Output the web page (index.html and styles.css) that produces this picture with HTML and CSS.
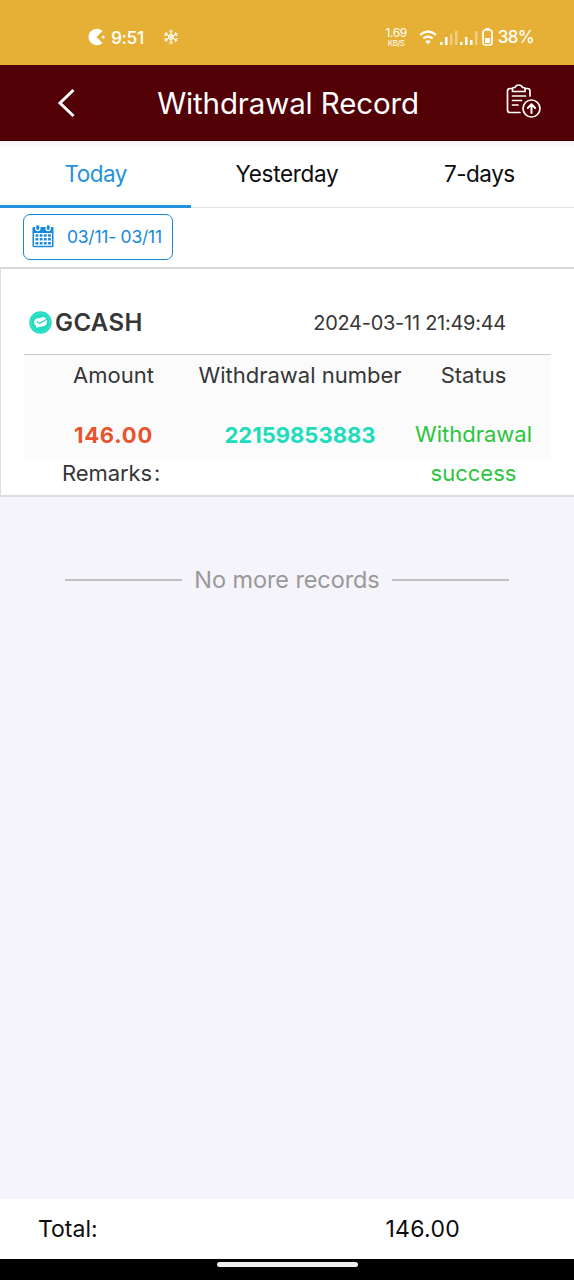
FILE: index.html
```html
<!DOCTYPE html>
<html lang="en">
<head>
<meta charset="utf-8">
<title>Withdrawal Record</title>
<link rel="stylesheet" href="styles.css">
</head>
<body>
<div class="phone">
  <div class="statusbar">
    <svg class="pac" width="18" height="18" viewBox="0 0 18 18"><path d="M14.500 3A8.300 8.300 0 1 0 14.500 15L8.500 9Z" fill="#fff"/><circle cx="15.200" cy="9" r="1.500" fill="#fff"/></svg>
    <span class="clock">9:51</span>
    <svg class="snow" width="16" height="16" viewBox="0 0 16 16" fill="none" stroke="#fff" stroke-width="1"><path id="arm" d="M8 0.500V15.500M6 1.500L8 3.500L10 1.500M6 14.500L8 12.500L10 14.500"/><use href="#arm" transform="rotate(60 8 8)"/><use href="#arm" transform="rotate(120 8 8)"/><circle cx="8" cy="8" r="2.500"/></svg>
    <div class="speed"><span class="rate">1.69</span><span class="unit">KB/S</span></div>
    <svg class="wifi" width="18" height="15" viewBox="0 0 18 15" fill="none" stroke="#fff" stroke-width="2.200"><path d="M1 4.800Q9-1.800 17 4.800M4.300 8.400Q9 4.800 13.700 8.400"/><path d="M9 14.500L6.300 11.300Q9 9.300 11.700 11.300Z" fill="#fff" stroke="none"/></svg>
    <svg class="signal" width="38" height="14" viewBox="0 0 38 14" fill="#fff"><path d="M0 11h2.500v3H0zM5 6h2.500v8H5zM20 11h2.500v3H20zM25 6h2.500v8H25zM30 9h2.500v5H30z"/><path d="M10 3h2.500v11H10zM15 0h2.500v14H15zM35 0h2.500v14H35z" opacity=".4"/></svg>
    <svg class="battery" width="11" height="18" viewBox="0 0 11 18"><rect x="1" y="2" width="9" height="15" rx="2.500" fill="none" stroke="#fff" stroke-width="1.700"/><path d="M3.500 0h4v2h-4zM3 10h5v5H3z" fill="#fff"/></svg>
    <span class="percent">38%</span>
  </div>
  <header class="header">
    <svg class="back" width="18" height="30" viewBox="0 0 18 30" fill="none" stroke="#fff" stroke-width="3"><path d="M16.500 2L3 15L16.500 28"/></svg>
    <h1 class="title">Withdrawal Record</h1>
    <svg class="export" width="36" height="34" viewBox="0 0 36 34" fill="none" stroke="#fff" stroke-width="1.700" stroke-linecap="round" stroke-linejoin="round"><path d="M6 4.500H4Q1.500 4.500 1.500 7V26Q1.500 28.500 4 28.500H14M19.500 4.500H21.500Q24 4.500 24 7V12M6.500 7.500V4.500Q6.500 3.500 8 3.500H9Q10 1 12.750 1T16.500 3.500H17.500Q19 3.500 19 4.500V7.500ZM6.500 12H19.500M6.500 16.500H15.500M6.500 21H12"/><circle cx="25.500" cy="24.500" r="8.500"/><path d="M25.500 29V20.500M21.800 24L25.500 20.300L29.200 24" stroke-width="2"/></svg>
  </header>
  <nav class="tabs">
    <span class="tab tab-active">Today</span>
    <span class="tab yesterday">Yesterday</span>
    <span class="tab week">7-days</span>
  </nav>
  <div class="filter">
    <div class="range">
      <svg width="22" height="24" viewBox="0 0 22 24"><path d="M1.500 3H20.500Q21.500 3 21.500 4V22Q21.500 23.300 20 23.300H2Q.5 23.300.5 22V4Q.5 3 1.500 3Z" fill="#1789dc"/><path d="M2 9h18v12.800H2z" fill="#fff"/><g stroke="#fff" stroke-width="1.200" fill="#1789dc"><rect x="3.700" y="0.600" width="4.200" height="6" rx="2"/><rect x="14.100" y="0.600" width="4.200" height="6" rx="2"/></g><path d="M3.500 11.500H19M3.500 15.300H19M3.500 19.200H19" stroke="#1789dc" stroke-width="2.500" stroke-dasharray="2.800 1.400"/></svg>
      <span class="range-text">03/11- 03/11</span>
    </div>
  </div>
  <main class="content">
    <section class="card">
      <div class="card-head">
        <svg class="coin" width="23" height="23" viewBox="0 0 23 23"><circle cx="11.500" cy="11.500" r="11.200" fill="#20dcc0"/><circle cx="11.500" cy="11.500" r="9.300" fill="none" stroke="#8af0df" stroke-width="1" stroke-dasharray="1 1.500"/><path d="M5 11Q5 7.500 10 7L14 6Q18 6.500 18 10.500Q18 15 13 15.500L7 16.800L7.500 15Q5 14 5 11Z" fill="#fff"/><path d="M8 10.500L10.500 12.500L18 8" fill="none" stroke="#20dcc0" stroke-width="1.300"/></svg>
        <span class="bank">GCASH</span>
        <time class="time">2024-03-11 21:49:44</time>
      </div>
      <div class="grid">
        <span class="cell head amount-h">Amount</span>
        <span class="cell head number-h">Withdrawal number</span>
        <span class="cell head status-h">Status</span>
        <span class="cell amount">146.00</span>
        <span class="cell number">22159853883</span>
        <span class="cell status">Withdrawal<br>success</span>
      </div>
      <div class="remarks">Remarks<span class="colon">:</span></div>
    </section>
    <div class="end"><span class="end-text">No more records</span></div>
  </main>
  <footer class="total"><span class="total-label">Total:</span><span class="total-value">146.00</span></footer>
  <div class="homebar"><div class="pill"></div></div>
</div>
</body>
</html>
```
FILE: styles.css
```css
* { box-sizing: border-box; }
body { margin: 0; font-family: Inter, Roboto, sans-serif; }
.phone { width: 574px; height: 1280px; display: flex; flex-direction: column; overflow: hidden; background: #f4f4fa; white-space: nowrap; }
.phone svg { display: block; flex: none; }
.statusbar { height: 65px; background: #e6af35; color: #fff; display: flex; align-items: center; padding: 9px 40px 0 88px; }
.clock { font-size: 17.500px; font-weight: 500; letter-spacing: -.4px; margin-left: 5px; width: 51px; }
.snow { margin-left: 1px; }
.speed { margin-left: auto; display: flex; flex-direction: column; align-items: center; }
.rate { font-size: 12px; line-height: 12px; letter-spacing: -.4px; }
.unit { font-size: 8px; line-height: 8px; letter-spacing: -.5px; }
.wifi { margin-left: 12px; }
.signal { margin: 2px 4px 0 3px; }
.percent { font-size: 17px; font-weight: 500; letter-spacing: -.7px; margin-left: 5px; }
.header { height: 76px; background: #520006; color: #fff; display: flex; align-items: center; padding: 0 32px 0 57px; border-bottom: 1px solid #42000a; }
.title { flex: 1; margin: 0; text-align: center; font-size: 29.500px; font-weight: 400; letter-spacing: -.15px; padding: 1px 15px 0 0; margin-left: 10px; }
.export { margin-top: -3px; }
.tabs { height: 67px; display: grid; grid-template: 67px / repeat(3, 1fr); background: linear-gradient(#f3f3f3, #fff 8px); color: #0c0c0c; }
.tab { display: flex; justify-content: center; font-size: 22.500px; line-height: 64px; padding-top: 1px; border-bottom: 1px solid #e2e2e4; letter-spacing: -.3px; }
.tab-active { padding-top: 0; line-height: 66px; height: 67px; color: #2492dd; border-bottom: 3px solid #2492dd; letter-spacing: -.5px; }
.week { padding-left: 2px; letter-spacing: -.5px; }
.filter { height: 59px; background: #fff; padding: 6px 23px; }
.range { width: 150px; height: 46px; border: 1px solid #1789dc; border-radius: 7px; display: flex; align-items: center; padding: 0 0 2px 8px; color: #1789dc; }
.range-text { font-size: 17.500px; letter-spacing: -.25px; margin-left: 13px; }
.content { flex: 1; }
.card { height: 230px; background: #fff; border-top: 2px solid #d7d7d7; border-left: 1px solid #dedede; border-bottom: 2px solid #dedee2; padding: 0 23px; color: #363636; }
.card-head { height: 86px; border-bottom: 1px solid #ccc; display: flex; align-items: center; padding: 22px 45px 0 5px; }
.bank { font-size: 24px; font-weight: 600; letter-spacing: .4px; margin-left: 3px; }
.time { margin-left: auto; font-size: 20px; letter-spacing: -.27px; }
.grid { height: 105px; background: #fbfbfb; display: grid; grid-template-columns: 179px 194px 153px; grid-template-rows: 60px 45px; }
.cell { display: flex; justify-content: center; font-size: 22px; line-height: 40px; }
.amount { color: #e8542f; font-weight: 700; letter-spacing: .8px; }
.number { color: #20dcbc; font-weight: 700; }
.status { display: block; text-align: center; color: #2bc53e; line-height: 39px; }
.remarks { padding-left: 38px; font-size: 22px; line-height: 26px; letter-spacing: -.1px; }
.colon { margin-left: 2px; }
.end { margin: 68px 65px 0; display: flex; align-items: center; gap: 12px; color: #999; font-size: 23.500px; line-height: 30px; letter-spacing: -.1px; }
.end::before, .end::after { content: ""; flex: 1; height: 2px; background: #c0c0c2; }
.total { height: 60px; background: #fff; color: #0c0c0c; display: flex; justify-content: space-between; padding: 0 114px 0 38px; font-size: 23px; line-height: 60px; }
.total-value { letter-spacing: .3px; }
.homebar { height: 21px; background: #000; padding-top: 3px; }
.pill { width: 141px; height: 5px; border-radius: 3px; background: #eee; margin: 0 auto; }
```
